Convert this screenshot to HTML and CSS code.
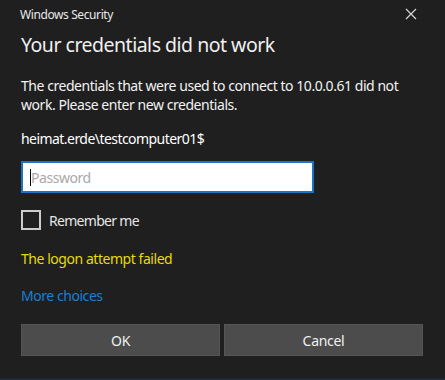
FILE: index.html
```html
<!DOCTYPE html>
<html lang="en">
  <head>
    <meta charset="utf-8" />
    <title>Windows Security</title>
    <link rel="stylesheet" href="styles.css">
  </head>
  <body>
    <div class="dialog">
      <div class="dialog__titlebar">
        <span class="dialog__app">Windows Security</span>
        <button class="dialog__close" aria-label="Close">
          <svg width="12" height="12" viewBox="0 0 12 12">
            <path d="M1 1 L11 11 M11 1 L1 11" stroke="currentColor" stroke-width="1.2" fill="none" />
          </svg>
        </button>
      </div>

      <h1 class="dialog__heading">Your credentials did not work</h1>

      <p class="dialog__text">
        The credentials that were used to connect to 10.0.0.61 did not
        work. Please enter new credentials.
      </p>

      <div class="dialog__user">heimat.erde\testcomputer01$</div>

      <div class="field">
        <span class="field__caret"></span>
        <span class="field__placeholder">Password</span>
      </div>

      <label class="check">
        <span class="check__box"></span>
        <span class="check__label">Remember me</span>
      </label>

      <div class="dialog__error">The logon attempt failed</div>

      <a class="dialog__more" href="#">More choices</a>

      <div class="dialog__actions">
        <button class="btn">OK</button>
        <button class="btn">Cancel</button>
      </div>
    </div>
  </body>
</html>
```

FILE: styles.css
```css
html,
body {
  margin: 0;
  padding: 0;
  background-color: #1f1f1f;
}

.dialog {
  width: 445px;
  height: 380px;
  box-sizing: border-box;
  padding: 0 22px 0 21px;
  display: flex;
  flex-direction: column;
  background-color: #1f1f1f;
  color: #ffffff;
  font-family: "Noto Sans", "Open Sans", sans-serif;
  font-size: 14px;
  letter-spacing: -0.45px;
  border-bottom: 2px solid #1d2a38;
}

.dialog__titlebar {
  height: 28px;
  display: flex;
  align-items: center;
  justify-content: space-between;
}
.dialog__app {
  font-size: 12px;
  letter-spacing: -0.4px;
  color: #e8e8e8;
  margin-left: -1px;
}
.dialog__close {
  border: 0;
  padding: 0;
  margin-right: 5px;
  background: transparent;
  color: #d6d6d6;
  width: 14px;
  height: 14px;
  display: flex;
  align-items: center;
  justify-content: center;
}

.dialog__heading {
  margin: 4px 0 0;
  font-size: 19.5px;
  letter-spacing: -0.5px;
  font-weight: normal;
  line-height: 26px;
  color: #f0f0f0;
}

.dialog__text {
  margin: 18px 0 0;
  line-height: 19px;
  color: #f2f2f2;
}

.dialog__user {
  margin-top: 15px;
  line-height: 19px;
  letter-spacing: -0.55px;
}

.field {
  margin-top: 13px;
  width: 293px;
  height: 32px;
  box-sizing: border-box;
  border: 2px solid #1b74c8;
  background-color: #ffffff;
  display: flex;
  align-items: center;
  padding-left: 7px;
}
.field__caret {
  width: 1px;
  height: 17px;
  background-color: #000;
}
.field__placeholder {
  color: #a8a8a8;
}

.check {
  margin-top: 17px;
  display: flex;
  align-items: center;
  gap: 8px;
}
.check__box {
  width: 20px;
  height: 20px;
  box-sizing: border-box;
  border: 2px solid #cccccc;
}
.check__label {
  color: #e6e6e6;
  letter-spacing: -0.7px;
}

.dialog__error {
  margin-top: 19px;
  line-height: 19px;
  color: #e8dc00;
}

.dialog__more {
  margin-top: 18px;
  line-height: 19px;
  color: #1a7fd1;
  text-decoration: none;
  align-self: flex-start;
}

.dialog__actions {
  margin-top: 19px;
  display: grid;
  grid-template-columns: 1fr 1fr;
  gap: 4px;
}
.btn {
  height: 32px;
  border: 1px solid #555555;
  background-color: #4c4c4c;
  color: #f0f0f0;
  font-family: inherit;
  font-size: 14px;
  letter-spacing: -0.3px;
}
```
